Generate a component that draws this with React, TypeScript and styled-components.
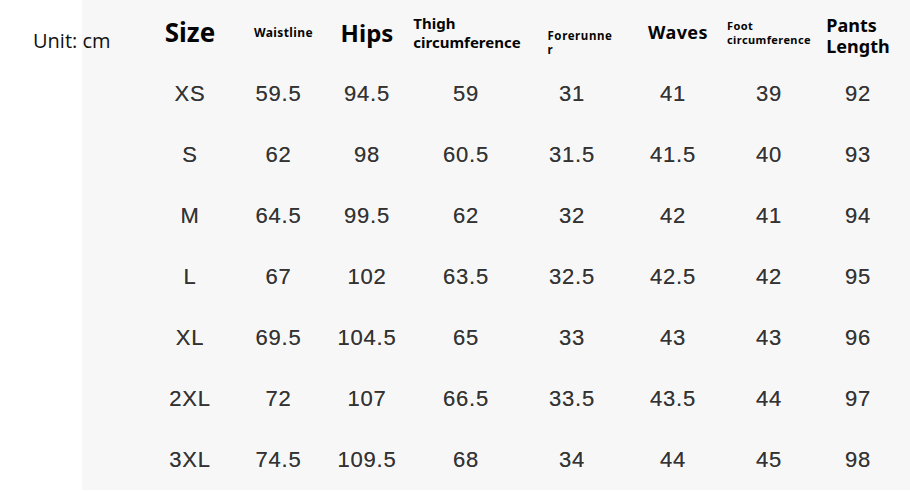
import styled, { createGlobalStyle } from 'styled-components';

const GlobalStyle = createGlobalStyle`
	* {
		box-sizing: border-box;
	}
	body {
		margin: 0;
		background: #fff;
	}
`;

const columns = '88px 89px 88px 110px 102px 100px 92px 86px';

const rows = [
	['XS', '59.5', '94.5', '59', '31', '41', '39', '92'],
	['S', '62', '98', '60.5', '31.5', '41.5', '40', '93'],
	['M', '64.5', '99.5', '62', '32', '42', '41', '94'],
	['L', '67', '102', '63.5', '32.5', '42.5', '42', '95'],
	['XL', '69.5', '104.5', '65', '33', '43', '43', '96'],
	['2XL', '72', '107', '66.5', '33.5', '43.5', '44', '97'],
	['3XL', '74.5', '109.5', '68', '34', '44', '45', '98'],
];

const App = () => {
	return (
		<>
			<GlobalStyle />
			<Page>
				<UnitLabel>Unit: cm</UnitLabel>
				<Panel>
					<HeaderRow>
						<HeadCell $size={26}>Size</HeadCell>
						<HeadCell $size={12} $spacing={0.4} $shift={5}>
							Waistline
						</HeadCell>
						<HeadCell $size={24}>Hips</HeadCell>
						<HeadCell $size={15} $lh={19} $shift={1}>
							Thigh
							<br />
							circumference
						</HeadCell>
						<HeadCell $size={11.5} $spacing={0.6} $lh={14} $shift={8} $drop={20}>
							Forerunne
							<br />r
						</HeadCell>
						<HeadCell $size={18} $spacing={0.4} $shift={5}>
							Waves
						</HeadCell>
						<HeadCell $size={11} $spacing={0.4} $lh={14}>
							Foot
							<br />
							circumference
						</HeadCell>
						<HeadCell $size={18} $lh={21} $drop={5}>
							Pants
							<br />
							Length
						</HeadCell>
					</HeaderRow>
					{rows.map((row) => (
						<DataRow key={row[0]}>
							{row.map((value, i) => (
								<DataCell key={i}>{value}</DataCell>
							))}
						</DataRow>
					))}
				</Panel>
			</Page>
		</>
	);
};

export default App;

const Page = styled.div`
	position: relative;
	width: 910px;
	height: 492px;
	padding-left: 82px;
`;

const UnitLabel = styled.div`
	position: absolute;
	left: 33px;
	top: 27px;
	font-family: 'Open Sans', 'Noto Sans', sans-serif;
	font-size: 20px;
	color: #111;
	line-height: 28px;
`;

const Panel = styled.div`
	width: 828px;
	height: 490px;
	background-color: #f7f7f7;
	padding-left: 64px;
`;

const HeaderRow = styled.div`
	display: grid;
	grid-template-columns: ${columns};
	height: 63px;
	padding-top: 3px;
`;

const HeadCell = styled.div<{
	$size: number;
	$spacing?: number;
	$lh?: number;
	$shift?: number;
	$drop?: number;
}>`
	display: flex;
	align-items: center;
	justify-content: center;
	text-align: left;
	font-family: 'Noto Sans', 'Open Sans', sans-serif;
	font-weight: 700;
	color: #050505;
	font-size: ${(props) => props.$size}px;
	letter-spacing: ${(props) => props.$spacing || 0}px;
	line-height: ${(props) => (props.$lh ? `${props.$lh}px` : '1.2')};
	${(props) => props.$shift && `padding-left: ${props.$shift * 2}px;`}
	${(props) => props.$drop && `padding-top: ${props.$drop}px;`}
	white-space: nowrap;
`;

const DataRow = styled.div`
	display: grid;
	grid-template-columns: ${columns};
	height: 61px;
	align-items: center;
`;

const DataCell = styled.div`
	text-align: center;
	font-family: 'Liberation Sans', Arial, sans-serif;
	font-size: 22px;
	letter-spacing: 0.8px;
	color: #333;
	text-shadow: 0 0 0.6px rgba(40, 40, 40, 0.6);
`;
